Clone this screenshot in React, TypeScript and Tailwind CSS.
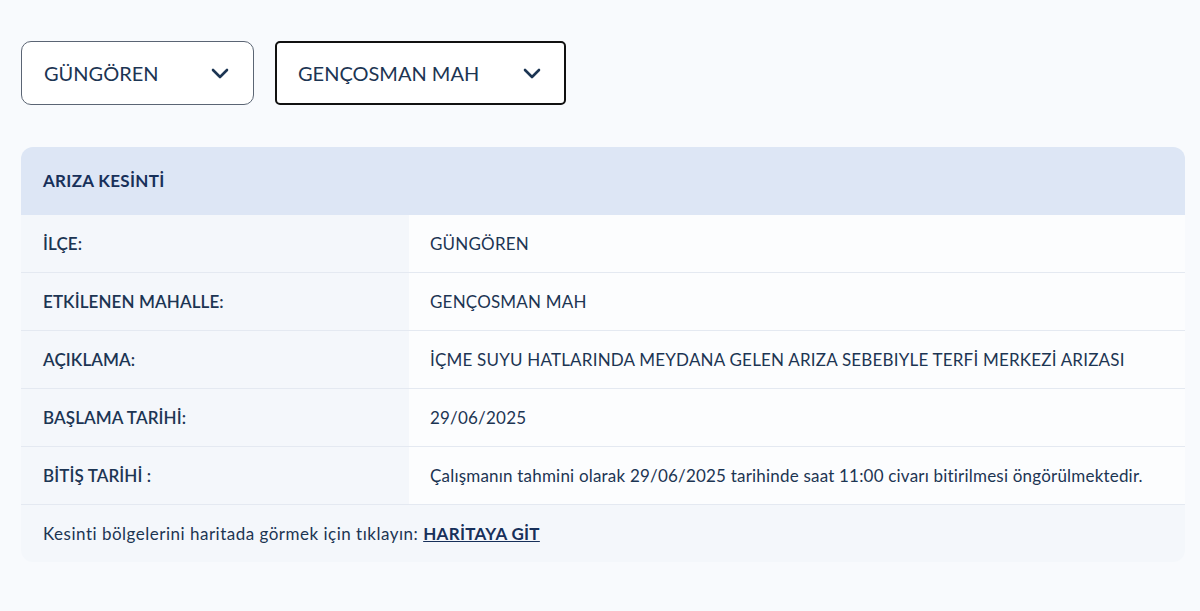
import React from 'react';

const rows = [
  { label: 'İLÇE:', value: 'GÜNGÖREN' },
  { label: 'ETKİLENEN MAHALLE:', value: 'GENÇOSMAN MAH' },
  { label: 'AÇIKLAMA:', value: 'İÇME SUYU HATLARINDA MEYDANA GELEN ARIZA SEBEBIYLE TERFİ MERKEZİ ARIZASI' },
  { label: 'BAŞLAMA TARİHİ:', value: '29/06/2025' },
  {
    label: 'BİTİŞ TARİHİ :',
    value: 'Çalışmanın tahmini olarak 29/06/2025 tarihinde saat 11:00 civarı bitirilmesi öngörülmektedir.',
  },
];

const Chevron = () => (
  <svg width="18" height="11" viewBox="0 0 18 11" fill="none">
    <path d="M2 2 L9 9 L16 2" stroke="#1c3553" strokeWidth="2.6" strokeLinecap="round" strokeLinejoin="round" />
  </svg>
);

const Select = ({ value, active }: { value: string; active?: boolean }) => (
  <div
    className={
      active
        ? 'flex items-center justify-between h-[64px] w-[291px] pl-[21px] pr-[23px] bg-white border-2 border-[#111] rounded-[5px]'
        : 'flex items-center justify-between h-[64px] w-[233px] pl-[22px] pr-[24px] bg-white border border-[#5b6574] rounded-[10px]'
    }
  >
    <span className="text-[20px] text-[#1c3553]">{value}</span>
    <Chevron />
  </div>
);

export default function App() {
  return (
    <div
      className="min-h-[611px] w-[1200px] bg-[#f8fafd] pl-[21px] pt-[41px]"
      style={{ fontFamily: 'Lato, "Open Sans", sans-serif' }}
    >
      <div className="flex gap-[21px]">
        <Select value="GÜNGÖREN" />
        <Select value="GENÇOSMAN MAH" active />
      </div>

      <div className="mt-[42px] w-[1164px] rounded-[12px] overflow-hidden bg-[#f4f7fb] text-[#1c3553]">
        <div className="h-[68px] flex items-center px-[22px] bg-[#dde6f5]">
          <span className="text-[17px] font-bold tracking-[0.3px] text-[#17305a]">ARIZA KESİNTİ</span>
        </div>
        {rows.map((r) => (
          <div key={r.label} className="flex h-[58px] border-b border-[#e4e9f1]">
            <div className="w-[388px] flex items-center pl-[22px] bg-[#f4f7fb] text-[17px] font-semibold tracking-[0.1px]">
              {r.label}
            </div>
            <div className="flex-1 flex items-center pl-[21px] bg-[#fcfdfe] text-[17px] tracking-[0.2px]">
              {r.value}
            </div>
          </div>
        ))}
        <div className="h-[57px] flex items-center pl-[22px] text-[17px] tracking-[0.5px]">
          Kesinti bölgelerini haritada görmek için tıklayın:&nbsp;
          <a className="font-bold underline tracking-[0.3px] text-[#17305a]">HARİTAYA GİT</a>
        </div>
      </div>
    </div>
  );
}
